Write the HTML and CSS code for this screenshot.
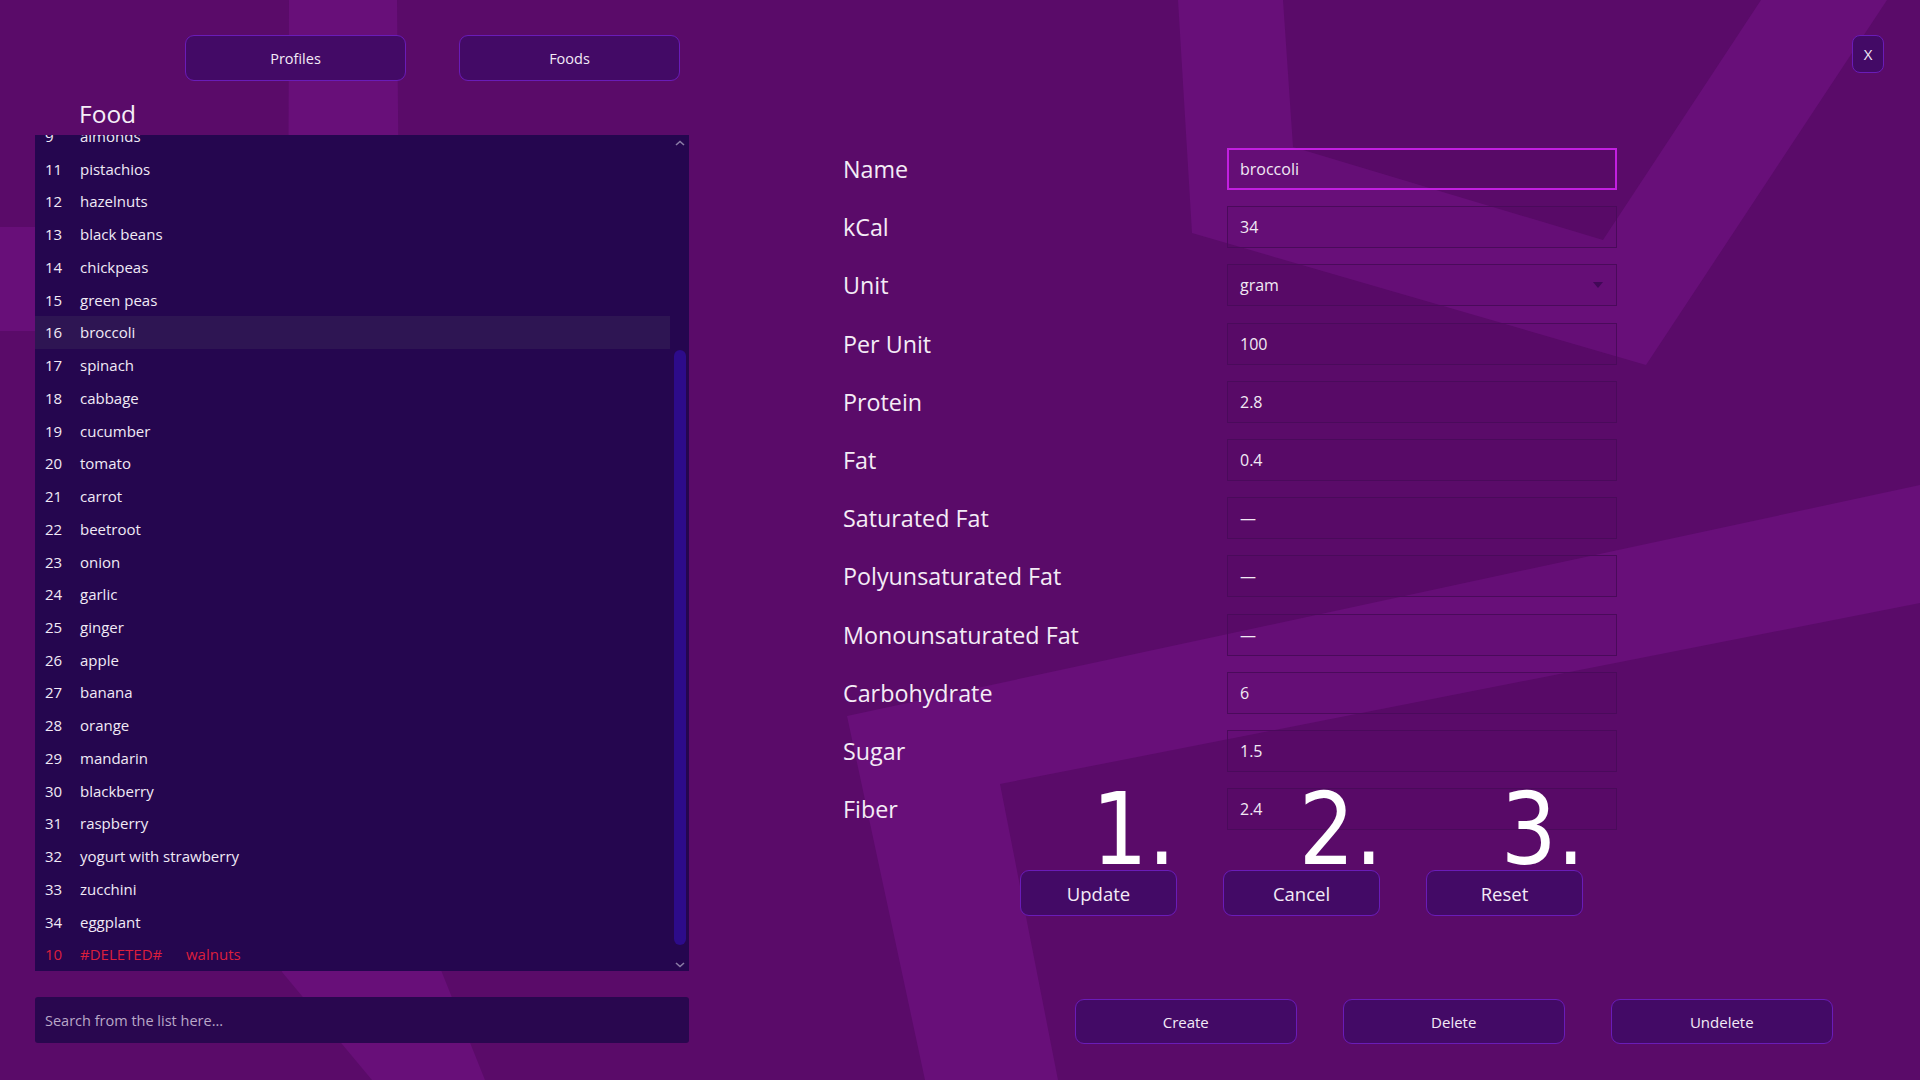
FILE: index.html
```html
<!DOCTYPE html>
<html lang="en">
<head>
<meta charset="utf-8">
<title>Food</title>
<link rel="stylesheet" href="styles.css">
</head>
<body>
<svg class="bg" viewBox="0 0 1920 1080" width="1920" height="1080" aria-hidden="true">
  <polygon class="band" points="1178,0 1192,233 1646,365 1887,0 1761,0 1603,240 1293,147 1283,0"/>
  <polygon class="band" points="847,716 1920,485 1920,603 1000,784 1058,1080 925,1080"/>
  <polygon class="band" points="289,0 397,0 405,880 485,1080 372,1080 282,972 286,880"/>
  <polygon class="band" points="0,227 35,227 35,331 0,331"/>
</svg>
<div class="app">
  <aside class="left">
    <nav class="nav">
      <button class="btn nav-btn">Profiles</button>
      <button class="btn nav-btn">Foods</button>
    </nav>
    <h1 class="title">Food</h1>
    <div class="list">
      <div class="rows">
        <div class="rows-inner">
          <div class="row"><span class="num">9</span><span class="name">almonds</span></div>
          <div class="row"><span class="num">11</span><span class="name">pistachios</span></div>
          <div class="row"><span class="num">12</span><span class="name">hazelnuts</span></div>
          <div class="row"><span class="num">13</span><span class="name">black beans</span></div>
          <div class="row"><span class="num">14</span><span class="name">chickpeas</span></div>
          <div class="row"><span class="num">15</span><span class="name">green peas</span></div>
          <div class="row selected"><span class="num">16</span><span class="name">broccoli</span></div>
          <div class="row"><span class="num">17</span><span class="name">spinach</span></div>
          <div class="row"><span class="num">18</span><span class="name">cabbage</span></div>
          <div class="row"><span class="num">19</span><span class="name">cucumber</span></div>
          <div class="row"><span class="num">20</span><span class="name">tomato</span></div>
          <div class="row"><span class="num">21</span><span class="name">carrot</span></div>
          <div class="row"><span class="num">22</span><span class="name">beetroot</span></div>
          <div class="row"><span class="num">23</span><span class="name">onion</span></div>
          <div class="row"><span class="num">24</span><span class="name">garlic</span></div>
          <div class="row"><span class="num">25</span><span class="name">ginger</span></div>
          <div class="row"><span class="num">26</span><span class="name">apple</span></div>
          <div class="row"><span class="num">27</span><span class="name">banana</span></div>
          <div class="row"><span class="num">28</span><span class="name">orange</span></div>
          <div class="row"><span class="num">29</span><span class="name">mandarin</span></div>
          <div class="row"><span class="num">30</span><span class="name">blackberry</span></div>
          <div class="row"><span class="num">31</span><span class="name">raspberry</span></div>
          <div class="row"><span class="num">32</span><span class="name">yogurt with strawberry</span></div>
          <div class="row"><span class="num">33</span><span class="name">zucchini</span></div>
          <div class="row"><span class="num">34</span><span class="name">eggplant</span></div>
          <div class="row deleted"><span class="num">10</span><span class="flag">#DELETED#</span><span class="name">walnuts</span></div>
        </div>
      </div>
      <div class="scrollbar">
        <svg class="arrow" viewBox="0 0 10 6" width="10" height="6"><polyline points="1,5 5,1.5 9,5"/></svg>
        <div class="track"><div class="thumb"></div></div>
        <svg class="arrow" viewBox="0 0 10 6" width="10" height="6"><polyline points="1,1 5,4.5 9,1"/></svg>
      </div>
    </div>
    <div class="search">Search from the list here...</div>
  </aside>

  <main class="right">
    <div class="topbar"><button class="btn close">X</button></div>
    <div class="form">
      <label class="label">Name</label><div class="field focus">broccoli</div>
      <label class="label">kCal</label><div class="field">34</div>
      <label class="label">Unit</label><div class="field select">gram<span class="caret"></span></div>
      <label class="label">Per Unit</label><div class="field">100</div>
      <label class="label">Protein</label><div class="field">2.8</div>
      <label class="label">Fat</label><div class="field">0.4</div>
      <label class="label">Saturated Fat</label><div class="field">—</div>
      <label class="label">Polyunsaturated Fat</label><div class="field">—</div>
      <label class="label">Monounsaturated Fat</label><div class="field">—</div>
      <label class="label">Carbohydrate</label><div class="field">6</div>
      <label class="label">Sugar</label><div class="field">1.5</div>
      <label class="label">Fiber</label><div class="field">2.4</div>
    </div>
    <div class="actions">
      <div class="step"><span class="marker m1">1.</span><button class="btn act">Update</button></div>
      <div class="step"><span class="marker m2">2.</span><button class="btn act">Cancel</button></div>
      <div class="step"><span class="marker m3">3.</span><button class="btn act">Reset</button></div>
    </div>
    <div class="bottom">
      <button class="btn wide">Create</button>
      <button class="btn wide">Delete</button>
      <button class="btn wide">Undelete</button>
    </div>
  </main>
</div>
</body>
</html>
```

FILE: styles.css
```css
* { box-sizing: border-box; }
html, body {
  margin: 0;
  padding: 0;
}
body {
  width: 1920px;
  height: 1080px;
  overflow: hidden;
  position: relative;
  background: #5a0b69;
  font-family: "Open Sans", "Noto Sans", sans-serif;
  color: #f4ecf6;
}
.bg {
  position: absolute;
  left: 0;
  top: 0;
  z-index: 0;
}
.band { fill: #680f79; }

.app {
  position: relative;
  z-index: 1;
  display: flex;
  height: 1080px;
}

/* ---------- buttons ---------- */
.btn {
  font-family: inherit;
  color: #f3eaf7;
  background: #430a66;
  border: 1.5px solid #6a1cb8;
  border-radius: 9px;
  padding: 0;
  margin: 0;
  display: flex;
  align-items: center;
  justify-content: center;
  cursor: pointer;
}

/* ---------- left column ---------- */
.left {
  margin-left: 35px;
  width: 654px;
  display: flex;
  flex-direction: column;
}
.nav {
  display: flex;
  gap: 53px;
  padding: 35px 0 0 150px;
}
.nav-btn {
  width: 221px;
  height: 46px;
  font-size: 14.5px;
}
.title {
  margin: 0;
  height: 54px;
  display: flex;
  align-items: flex-end;
  padding: 0 0 9px 44px;
  font-size: 24.5px;
  font-weight: 400;
  line-height: 24.5px;
  color: #f6eef8;
}
.list {
  height: 836px;
  background: #25064f;
  display: flex;
}
.rows {
  flex: 1;
  overflow: hidden;
}
.rows-inner {
  margin-top: -15.4px;
}
.row {
  height: 32.74px;
  display: flex;
  align-items: center;
  padding-left: 10px;
  font-size: 15px;
  color: #f1eaf6;
}
.row.selected { background: #2e1553; }
.row .num { width: 35px; }
.row .flag { width: 106px; }
.row.deleted { color: #dc1f3c; }

.scrollbar {
  width: 19px;
  display: flex;
  flex-direction: column;
  align-items: center;
  padding: 5px 0 3px;
}
.arrow {
  flex: none;
  fill: none;
  stroke: #8b7ca6;
  stroke-width: 1.6;
}
.track {
  flex: 1;
  width: 100%;
  display: flex;
  justify-content: center;
  padding-top: 204px;
  padding-bottom: 12px;
}
.thumb {
  width: 12px;
  height: 595px;
  border-radius: 6px;
  background: #2d0b8a;
}
.search {
  margin-top: 26px;
  height: 46px;
  background: #29074f;
  border-radius: 3px;
  display: flex;
  align-items: center;
  padding-left: 10px;
  font-size: 14.5px;
  color: #b9a8c8;
}

/* ---------- right area ---------- */
.right {
  flex: 1;
  display: flex;
  flex-direction: column;
}
.topbar {
  display: flex;
  justify-content: flex-end;
  padding: 35px 36px 0 0;
}
.close {
  width: 32px;
  height: 38px;
  border-radius: 8px;
  font-size: 15px;
}
.form {
  margin-top: 75px;
  padding-left: 154px;
  display: grid;
  grid-template-columns: 384px 390px;
  grid-auto-rows: 42px;
  row-gap: 16.2px;
}
.label {
  display: flex;
  align-items: center;
  font-size: 23.3px;
  color: #f4ecf6;
}
.field {
  border: 1px solid #4a0a5b;
  background: rgba(70, 5, 90, 0.06);
  display: flex;
  align-items: center;
  padding-left: 12px;
  font-size: 16px;
  color: #f1e9f4;
  position: relative;
}
.field.focus {
  border: 2px solid #c21fe0;
  padding-left: 11px;
}
.caret {
  margin-left: auto;
  margin-right: 13px;
  width: 0;
  height: 0;
  border-left: 5px solid transparent;
  border-right: 5px solid transparent;
  border-top: 6px solid #410857;
}

.actions {
  margin-top: 40px;
  padding-left: 331px;
  display: flex;
  gap: 46px;
}
.step {
  position: relative;
}
.act {
  width: 157px;
  height: 46px;
  font-size: 18.5px;
}
.marker {
  position: absolute;
  bottom: calc(100% + 2.6px);
  font-family: "DejaVu Sans", sans-serif;
  font-size: 100px;
  line-height: 75px;
  color: #ffffff;
  transform: scaleX(0.88);
  transform-origin: 50% 50%;
  white-space: nowrap;
}
.m1 { left: 66px; }
.m2 { left: 70px; }
.m3 { left: 69px; }

.bottom {
  margin-top: 83px;
  padding-left: 386px;
  display: flex;
  gap: 46.5px;
}
.wide {
  width: 221.5px;
  height: 45px;
  font-size: 15px;
}
```
